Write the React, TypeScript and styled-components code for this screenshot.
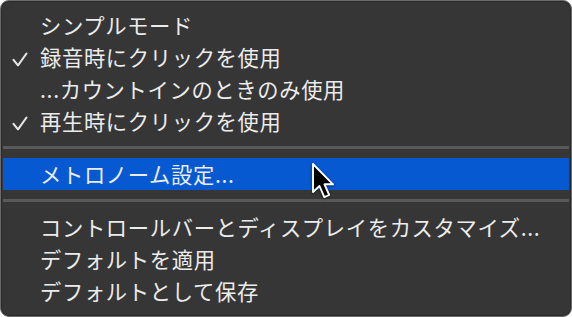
import React from "react";
import styled, { createGlobalStyle } from "styled-components";

const Global = createGlobalStyle`
  html, body { margin: 0; padding: 0; background: #ffffff; }
  body { font-family: "Noto Sans CJK JP", "Noto Sans", sans-serif; }
`;

const Menu = styled.div`
  position: relative;
  box-sizing: border-box;
  width: 572px;
  height: 317px;
  background: #363636;
  border: 1px solid #6c6c6c;
  border-radius: 9px;
  box-shadow: inset 0 0 0 1px #2a2a2a;
  padding: 8px 2px 0 2px;
  display: flex;
  flex-direction: column;
  overflow: hidden;
`;

const Item = styled.div<{ $active?: boolean }>`
  height: 32px;
  display: grid;
  grid-template-columns: 36px 1fr;
  align-items: center;
  padding-left: 1px;
  background: ${(p) => (p.$active ? "#0759d2" : "transparent")};
  color: #ececec;
  font-size: 21.3px;
  line-height: 32px;
  white-space: nowrap;
`;

const Check = styled.span`
  display: flex;
  justify-content: flex-end;
  padding-right: 12px;
  padding-top: 5px;
`;

const Label = styled.span`
  letter-spacing: 0.65px;
`;

const Separator = styled.div<{ $h: number }>`
  height: ${(p) => p.$h}px;
  display: flex;
  align-items: center;
  &::after {
    content: "";
    display: block;
    width: 100%;
    height: 3px;
    background: #595959;
  }
`;

const Pointer = styled.svg`
  position: absolute;
  left: 309px;
  top: 161px;
  filter: drop-shadow(0 1px 1.5px rgba(0, 0, 0, 0.5));
`;

const CheckMark = () => (
  <svg width="16" height="15" viewBox="0 0 16 15">
    <path d="M1.5 7.8 L6 13.3 L14.5 1.5" fill="none" stroke="#e6e6e6" strokeWidth="2.1" strokeLinecap="round" strokeLinejoin="round" />
  </svg>
);

type Entry = { label: string; checked?: boolean; active?: boolean } | { sep: number };

const entries: Entry[] = [
  { label: "シンプルモード" },
  { label: "録音時にクリックを使用", checked: true },
  { label: "...カウントインのときのみ使用" },
  { label: "再生時にクリックを使用", checked: true },
  { sep: 21 },
  { label: "メトロノーム設定...", active: true },
  { sep: 21 },
  { label: "コントロールバーとディスプレイをカスタマイズ..." },
  { label: "デフォルトを適用" },
  { label: "デフォルトとして保存" },
];

export default function App() {
  return (
    <>
      <Global />
      <Menu>
        {entries.map((e, i) =>
          "sep" in e ? (
            <Separator key={i} $h={e.sep} />
          ) : (
            <Item key={i} $active={e.active}>
              <Check>{e.checked ? <CheckMark /> : null}</Check>
              <Label>{e.label}</Label>
            </Item>
          )
        )}
        <Pointer width="28" height="40" viewBox="0 0 28 40">
          <path
            d="M3 2 L3 30 L9.5 24 L14.3 35.2 L19.2 33 L14.5 22.3 L23 22.3 Z"
            fill="#000"
            stroke="#fff"
            strokeWidth="1.9"
            strokeLinejoin="round"
          />
        </Pointer>
      </Menu>
    </>
  );
}
